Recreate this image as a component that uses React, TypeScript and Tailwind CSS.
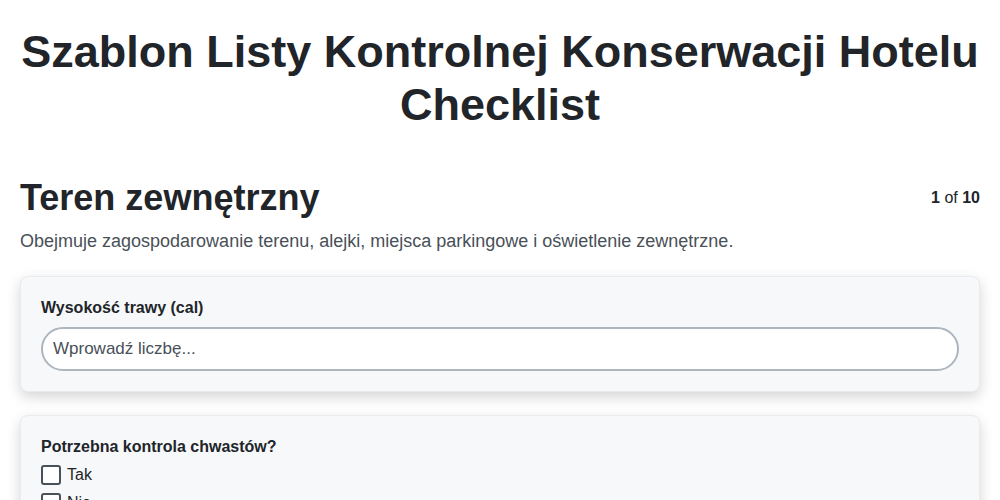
import React from 'react';

const font = { fontFamily: '"Liberation Sans", Arial, sans-serif' };

export default function App() {
  return (
    <div className="min-h-screen bg-white px-5 text-[#212529]" style={font}>
      <h1 className="pt-[25px] text-center text-[45px] font-bold leading-[53px] text-[#212529]">
        Szablon Listy Kontrolnej Konserwacji Hotelu Checklist
      </h1>

      <div className="mt-[45px] flex items-start justify-between">
        <h2 className="text-[36px] font-bold leading-[43px]">Teren zewnętrzny</h2>
        <div className="pt-[10px] text-base">
          <span className="font-bold">1</span> of <span className="font-bold">10</span>
        </div>
      </div>
      <p className="mt-[10px] text-[18px] leading-[24px] text-[#495057]">
        Obejmuje zagospodarowanie terenu, alejki, miejsca parkingowe i oświetlenie zewnętrzne.
      </p>

      <div className="mt-[23px] flex flex-col gap-[23px]">
        <div className="rounded-lg border border-[#e9ecef] bg-[#f7f8fa] px-5 py-5 shadow-[0_5px_14px_rgba(0,0,0,0.17)]">
          <label className="block text-[16px] font-bold leading-[22px]">Wysokość trawy (cal)</label>
          <input
            type="text"
            placeholder="Wprowadź liczbę..."
            className="mt-[8px] h-[44px] w-full rounded-full border-2 border-[#adb5bd] bg-white px-[10px] text-[17px] text-[#212529] outline-none placeholder:text-[#495057]"
          />
        </div>

        <div className="rounded-lg border border-[#e9ecef] bg-[#f7f8fa] px-5 py-5 shadow-[0_5px_14px_rgba(0,0,0,0.17)]">
          <div className="text-[16px] font-bold leading-[22px]">Potrzebna kontrola chwastów?</div>
          <div className="mt-[7px] flex flex-col gap-[8px]">
            {['Tak', 'Nie'].map((o) => (
              <label key={o} className="flex items-center gap-[6px] text-[16px] leading-[20px]">
                <span className="inline-block h-[20px] w-[20px] rounded-[3px] border-2 border-[#495057] bg-white" />
                {o}
              </label>
            ))}
          </div>
        </div>
      </div>
    </div>
  );
}
